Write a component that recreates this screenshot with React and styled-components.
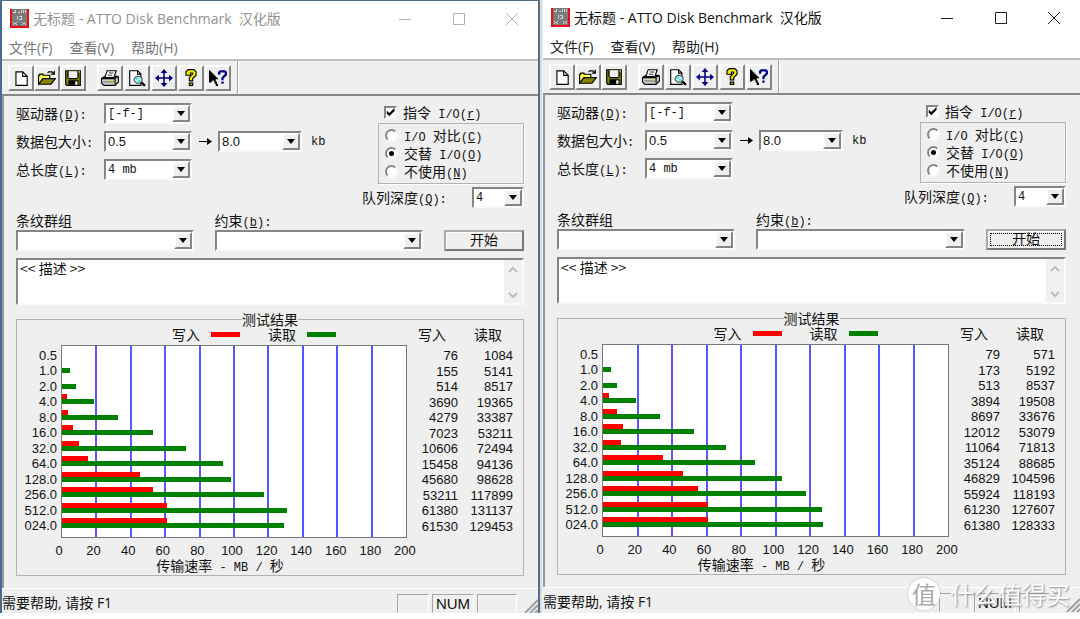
import React from "react";
import styled, { createGlobalStyle, css } from "styled-components";

const GlobalStyle = createGlobalStyle`
  * {
    box-sizing: border-box;
  }

  body {
    margin: 0;
    background: #fff;
    color: #111;
    font: 14px/16px "Noto Sans CJK SC", sans-serif;
  }

  input, select, textarea, button {
    margin: 0;
    color: inherit;
    font: inherit;
  }
`;

const face = "#efefef";

const sunken = css`
  border: 2px solid;
  border-color: #858585 #fafafa #fafafa #858585;
`;

const raised = css`
  border: 2px solid;
  border-color: #fdfdfd #858585 #858585 #fdfdfd;
`;

const Desktop = styled.main`
  display: grid;
  grid-template-columns: 1fr 1fr;
  position: relative;
`;

const Window = styled.section`
  min-width: 0;
  background: ${face};
  border: solid #4f7088;
  border-width: ${({ $active }) => ($active ? "0" : "1px 2px 0 2px")};
  border-left: ${({ $active }) => ($active ? "2px solid #dcdcdc" : "2px solid #476c93")};
  padding-left: ${({ $active }) => ($active ? "1px" : "0")};
`;

const TitleBar = styled.header`
  display: flex;
  align-items: center;
  height: 35px;
  padding-left: 8px;
  background: #fff;
  color: ${({ $active }) => ($active ? "#111" : "#929292")};
`;

const Title = styled.h1`
  flex: 1;
  margin: 0 0 0 4px;
  font: 14px/18px "Open Sans", "Noto Sans CJK SC", sans-serif;
  white-space: pre;
`;

const CaptionButton = styled.button`
  display: flex;
  align-items: center;
  justify-content: center;
  width: 54px;
  height: 34px;
  padding: 0;
  border: 0;
  background: none;
  color: ${({ $active }) => ($active ? "#222" : "#b0b0b0")};

  &:last-child {
    width: 52px;
  }
`;

const MenuBar = styled.nav`
  display: flex;
  gap: 17px;
  height: 23px;
  padding-left: 7px;
  background: #fff;
`;

const MenuItem = styled.button`
  padding: 0;
  border: 0;
  background: none;
  font: 14px/22px "Open Sans", "Noto Sans CJK SC", sans-serif;
  color: ${({ $active }) => ($active ? "#222" : "#757575")};
`;

const ToolBar = styled.div`
  display: flex;
  align-items: center;
  height: 35px;
  padding-left: 6px;
  border-top: 2px solid #bdbdbd;
`;

const ToolGroup = styled.div`
  display: flex;
  gap: ${({ $wide }) => ($wide ? "0" : "1px")};
  margin-right: ${({ $wide }) => ($wide ? "11px" : "6px")};
`;

const ToolButton = styled.button`
  ${raised}
  display: flex;
  align-items: center;
  justify-content: center;
  width: 26px;
  height: 26px;
  padding: 0;
  background: ${face};
`;

const ToolEnd = styled.span`
  align-self: stretch;
  border-left: 1px solid #a5a5a5;
  border-right: 1px solid #fff;
`;

const Client = styled.form`
  padding: 7px 14px 12px 12px;
  border: solid #888;
  border-width: 2px 0 0 2px;
  border-left-color: #999;
`;

const Settings = styled.div`
  display: flex;
  justify-content: space-between;
`;

const Fields = styled.div`
  display: flex;
  flex-direction: column;
  gap: 7px;
`;

const Field = styled.div`
  display: flex;
  align-items: center;
  height: 21px;
`;

const FieldLabel = styled.label`
  width: 88px;
  white-space: nowrap;
`;

const Mono = styled.span`
  font: 12px/12px "Liberation Mono", monospace;
`;

const Arrow = styled.span`
  display: flex;
  justify-content: center;
  width: 26px;
`;

const Unit = styled(Mono)`
  margin-left: 9px;
`;

const SelectFrame = styled.span`
  ${sunken}
  display: grid;
  width: ${({ $width }) => $width};
  height: 21px;
  background: #fff;
`;

const SelectInput = styled.select`
  grid-area: 1 / 1;
  width: 100%;
  padding: 0 18px 0 2px;
  border: 0;
  background: none;
  appearance: none;
  font: ${({ $mono }) =>
    $mono
      ? '12px/16px "Liberation Mono", monospace'
      : '13px/16px "Liberation Sans", sans-serif'};
`;

const SelectArrow = styled.span`
  ${raised}
  grid-area: 1 / 1;
  justify-self: end;
  display: flex;
  align-items: center;
  justify-content: center;
  width: 18px;
  background: ${face};
  pointer-events: none;

  &::before {
    content: "";
    border: 4px solid transparent;
    border-top: 5px solid #000;
    border-bottom: 0;
  }
`;

const Options = styled.div`
  display: flex;
  flex-direction: column;
  width: 162px;
`;

const Choice = styled.label`
  display: flex;
  align-items: center;
  gap: 6px;
  height: 18px;
  margin-left: ${({ $inset }) => ($inset ? "6px" : "22px")};
  white-space: pre;
`;

const Check = styled.input`
  ${sunken}
  display: grid;
  width: 13px;
  height: 13px;
  background: #fff;
  appearance: none;

  &:checked::before {
    content: "";
    background: #000;
    clip-path: polygon(8% 35%, 36% 60%, 95% 5%, 95% 38%, 36% 96%, 8% 68%);
  }
`;

const Radio = styled.input`
  ${sunken}
  display: flex;
  align-items: center;
  justify-content: center;
  width: 13px;
  height: 13px;
  border-radius: 50%;
  background: #fff;
  appearance: none;

  &:checked::before {
    content: "";
    width: 5px;
    height: 5px;
    border-radius: 50%;
    background: #000;
  }
`;

const RadioGroup = styled.fieldset`
  min-width: 0;
  margin: 2px 0 3px 16px;
  padding: 2px 0 3px;
  border: 1px solid #b2b2b2;
  box-shadow: 1px 1px #fff;
`;

const Queue = styled.div`
  display: flex;
  align-items: center;
  justify-content: space-between;
  white-space: nowrap;
`;

const Groups = styled.div`
  display: grid;
  grid-template-columns: 178fr 209fr 80px;
  grid-template-rows: 16px 21px;
  column-gap: 21px;
  row-gap: 2px;
  margin-top: 4px;
`;

const StartButton = styled.button`
  grid-column: 3;
  padding: 0 0 3px;
  border: 2px solid;
  border-color: #aaa #777 #777 #aaa;
  background: ${face};
  box-shadow: inset 1px 1px #fff;
  line-height: 14px;
  outline: ${({ $focused }) => ($focused ? "1px dotted #000" : "none")};
  outline-offset: -5px;
`;

const Description = styled.div`
  ${sunken}
  display: flex;
  height: 47px;
  margin-top: 7px;
  background: #fff;
`;

const DescriptionText = styled.textarea`
  flex: 1;
  padding: 0 2px;
  border: 0;
  outline: 0;
  background: none;
  resize: none;
  overflow: hidden;
`;

const Scroller = styled.div`
  display: flex;
  flex-direction: column;
  align-items: center;
  justify-content: space-between;
  width: 18px;
  padding: 6px 0 4px;
  background: #f1f1f1;
`;

const Results = styled.fieldset`
  display: grid;
  grid-template-columns: 40px 1fr 116px;
  grid-template-rows: 19px auto auto;
  column-gap: 0;
  min-width: 0;
  margin: 7px 0 0;
  padding: 0 0 1px;
  border: 1px solid #b2b2b2;
`;

const ResultsTitle = styled.legend`
  margin: 0 auto;
  padding: 0;
  line-height: 14px;
`;

const Legend = styled.div`
  grid-area: 1 / 2;
  display: flex;
  align-items: center;
  justify-content: center;
  gap: 11px;
  padding: 0 0 3px 44px;
  line-height: 14px;
`;

const Swatch = styled.span`
  width: 29px;
  height: 5px;
  background: ${({ $color }) => $color};

  & + span {
    margin-left: 17px;
  }
`;

const figures = css`
  font-family: "Liberation Sans", sans-serif;
  font-size: 13px;
  line-height: 15px;
`;

const rowHeights = css`
  ${figures}
  height: 15px;

  &:nth-child(even) {
    height: 16px;
  }
`;

const Sizes = styled.ol`
  grid-area: 2 / 1;
  margin: 0;
  padding: 3px 0 0;
  list-style: none;
  text-align: right;
`;

const Size = styled.li`
  ${rowHeights}
`;

const Plot = styled.svg`
  grid-area: 2 / 2;
  display: block;
  width: calc(100% - 4px);
  height: 193px;
  margin-left: 4px;
  border: 1px solid #777;
  background: #fff;
`;

const Ticks = styled.div`
  ${figures}
  grid-area: 3 / 2;
  display: flex;
  justify-content: space-between;
  padding: 5px 2px 0;
`;

const Tick = styled.span`
  display: flex;
  justify-content: center;
  width: 0;
`;

const AxisTitle = styled.div`
  grid-area: 4 / 2;
  padding-right: 24px;
  line-height: 14px;
  text-align: center;
  white-space: pre;
`;

const Values = styled.table`
  grid-area: 1 / 3 / 3 / 4;
  align-self: start;
  width: 100%;
  border-collapse: collapse;
  table-layout: fixed;
`;

const ValueHead = styled.th`
  height: 22px;
  padding: 0 ${({ $last }) => ($last ? "21px" : "12px")} 0 0;
  width: ${({ $last }) => ($last ? "65px" : "51px")};
  font-weight: normal;
  line-height: 16px;
  text-align: right;
  vertical-align: top;
`;

const ValueRow = styled.tr`
  ${rowHeights}
`;

const Value = styled.td`
  padding: 0;
  text-align: right;

  &:last-child {
    padding-right: 10px;
  }
`;

const StatusBar = styled.footer`
  display: flex;
  align-items: stretch;
  gap: 3px;
  height: 25px;
  padding-top: 5px;
  border-top: 1px solid #fff;
  font: 14px/18px "Open Sans", "Noto Sans CJK SC", sans-serif;
`;

const StatusText = styled.span`
  flex: 1;
`;

const Pane = styled.span`
  width: ${({ $width }) => $width};
  border: 1px solid;
  border-color: #a5a5a5 #fff transparent #a5a5a5;
  font-family: "Liberation Sans", sans-serif;
  font-size: 15px;
  text-align: center;
`;

const Grip = styled.svg`
  align-self: end;
  width: 18px;
  height: 14px;
`;

const Watermark = styled.div`
  position: absolute;
  right: 10px;
  bottom: 3px;
  display: flex;
  align-items: center;
  gap: 10px;
  color: #fff;
  font-size: 24px;
  line-height: 32px;
  text-shadow: 1px 1px 2px #888;
`;

const WatermarkBadge = styled.span`
  width: 32px;
  height: 32px;
  border-radius: 50%;
  background: #fff;
  box-shadow: 0 0 2px #aaa;
  color: #aaa;
  text-align: center;
  text-shadow: none;
`;

const AppIcon = () => (
  <svg width="19" height="19" viewBox="0 0 19 19" shapeRendering="crispEdges">
    <path fill="#f00d12" d="M0 0h19v19H0z" />
    <path fill="#7b7b7b" d="M2 0h15v17H2z" />
    <path
      fill="none"
      stroke="#d5d5d5"
      d="M3 3.500h3M5.500 1v3M8 3.500h2M11.500 1v3M13.500 1v3M15.500 1v3M7.500 7v4M9 7.500h2M9 10.500h2M11.500 7v4M3 13.500h1m2 0h1M4 14.500h2M3 15.500h1m2 0h1M12 13.500h1m2 0h1M13 14.500h2M12 15.500h1m2 0h1"
    />
  </svg>
);

const toolIcons = {
  新建: (
    <>
      <path fill="#fff" stroke="#000" d="M3.500 2.500h6l4 4v8h-10z" />
      <path fill="none" stroke="#000" d="M9.500 2.500v4h4" />
    </>
  ),
  打开: (
    <>
      <path fill="#ffff55" stroke="#000" d="M.5 13.500v-8h1v-1h3v1h6v3h-6z" />
      <path fill="#848400" stroke="#000" d="M.5 13.500l4-5h11l-4 5z" />
      <path fill="none" stroke="#000" d="M8.500 3.500l1-1h3l2 2M14.500 1.500v3h-3" />
    </>
  ),
  保存: (
    <>
      <path fill="#848400" stroke="#000" d="M1.500 1.500h13v13h-12l-1-1z" />
      <path fill="#efefef" d="M4 2h8v6H4z" />
      <path fill="#000" d="M3 2h1v6H3zM12 2h1v6h-1zM4 8h8v1H4zM4 10h9v4H4z" />
      <path fill="#fff" d="M10 11h2v3h-2z" />
      <path fill="#efefef" d="M13 2h1v1h-1z" />
    </>
  ),
  打印: (
    <>
      <path fill="#ccc" stroke="#000" d="M.5 8.500l3-2h11l1 1v4l-3 3h-10l-2-2z" />
      <path fill="#fff" stroke="#000" d="M3.500 7.500l2-6h8l-2 6z" />
      <path fill="none" stroke="#333" d="M7 3.500h4M6 5.500h4" />
      <path fill="none" stroke="#000" d="M.5 8.500h11l4-2M12.500 8.500v5" />
      <path fill="#777" d="M2 11h10v1H2z" />
      <path fill="#dede00" d="M8 10h3v1H8z" />
    </>
  ),
  打印预览: (
    <>
      <path fill="#fff" stroke="#000" d="M1.500 1.500h7l3 3v10h-10z" />
      <path fill="none" stroke="#000" d="M8.500 1.500v3h3" />
      <path fill="#b5f5f5" stroke="#555" d="M7.500 6.500h3l2 2v2l-2 2h-3l-2-2v-2z" />
      <path fill="#00e5e5" d="M7 8h2v1H7zM9 10h2v1H9z" />
      <path fill="none" stroke="#000" strokeWidth="2" d="M12 12l3 3" />
    </>
  ),
  移动: (
    <path
      fill="#000080"
      d="M8 0L11 3.500H8.700V7.300H12.500V5L16 8 12.500 11V8.700H8.700v3.800H11L8 16 5 12.500h2.300V8.700H3.500V11L0 8l3.500-3v2.300h3.800V3.500H5z"
    />
  ),
  关于: (
    <path
      fill="#f5ef00"
      stroke="#000"
      d="M3.500 5.500v-3l2-2h5l2 2v3l-3 3v2h-3v-3l3-3v-1h-2v2h-3zM6.500 12.500h3v2h-3z"
    />
  ),
  帮助: (
    <>
      <path fill="#000" d="M0 1h1v1h1v1h1v1h1v1h1v1h1v1h1v1h1v1H6v2h1v2h1v2H6v-2H5v-2H4v-1H3v1H2v1H0z" />
      <path fill="none" stroke="#000080" strokeWidth="2" d="M9 5V3l1-1h4l1 1v2l-3 3v2M11 12h2" />
    </>
  ),
};

const ToolIcon = ({ name }) => (
  <svg width="18" height="18" viewBox="0 0 16 16">
    {toolIcons[name]}
  </svg>
);

const Chevron = ({ down }) => (
  <svg width="10" height="8" viewBox="0 0 10 8" fill="none" stroke="#bebebe" strokeWidth="2">
    <path d={down ? "M1 2l4 4 4-4" : "M1 6l4-4 4 4"} />
  </svg>
);

const Select = ({ width, mono, ...props }) => (
  <SelectFrame $width={width}>
    <SelectInput $mono={mono} defaultValue={props.value} id={props.id} aria-label={props.label}>
      <option>{props.value}</option>
    </SelectInput>
    <SelectArrow />
  </SelectFrame>
);

const Key = ({ children, before = "", colon }) => (
  <Mono>
    {before}(<u>{children}</u>){colon && ":"}
  </Mono>
);

const WRITE = "#ff0000";
const READ = "#008000";
const sizes = ["0.5", "1.0", "2.0", "4.0", "8.0", "16.0", "32.0", "64.0", "128.0", "256.0", "512.0", "024.0"];
const ticks = [0, 20, 40, 60, 80, 100, 120, 140, 160, 180, 200];

const runs = [
  {
    id: "first",
    write: [76, 155, 514, 3690, 4279, 7023, 10606, 15458, 45680, 53211, 61380, 61530],
    read: [1084, 5141, 8517, 19365, 33387, 53211, 72494, 94136, 98628, 117899, 131137, 129453],
  },
  {
    id: "second",
    active: true,
    write: [79, 173, 513, 3894, 8697, 12012, 11064, 35124, 46829, 55924, 61230, 61380],
    read: [571, 5192, 8537, 19508, 33676, 53079, 71813, 88685, 104596, 118193, 127607, 128333],
  },
];

// Rates are in KB/s, the axis ends at 200 MB/s. Very slow rates leave no bar.
const barWidth = (rate) => (rate < 2000 ? 0 : `${rate / 2000}%`);
const rowTop = (i) => Math.floor(i * 15.5);

const Chart = ({ write, read }) => (
  <Plot role="img" aria-label="测试结果" shapeRendering="crispEdges">
    {ticks.slice(1, -1).map((tick) => (
      <line key={tick} x1={`${tick / 2}%`} x2={`${tick / 2}%`} y1="0" y2="100%" stroke="#5656ff" strokeWidth="2" />
    ))}
    {sizes.map((size, i) => (
      <g key={size}>
        <rect x="-1" y={rowTop(i) + 2} width={barWidth(write[i])} height="5" fill={WRITE} />
        <rect x="-1" y={rowTop(i) + 7} width={barWidth(read[i])} height="5" fill={READ} />
      </g>
    ))}
  </Plot>
);

const Benchmark = ({ id, active, write, read }) => (
  <Window $active={active}>
    <TitleBar $active={active}>
      <AppIcon />
      <Title>{"无标题 - ATTO Disk Benchmark  汉化版"}</Title>
      <CaptionButton $active={active} type="button" aria-label="最小化">
        <svg width="12" height="12" stroke="currentColor"><path d="M0 6.500h12" /></svg>
      </CaptionButton>
      <CaptionButton $active={active} type="button" aria-label="最大化">
        <svg width="12" height="12" fill="none" stroke="currentColor"><path d="M.5.5h11v11H.5z" /></svg>
      </CaptionButton>
      <CaptionButton $active={active} type="button" aria-label="关闭">
        <svg width="12" height="12" stroke="currentColor"><path d="M0 0l12 12M12 0L0 12" /></svg>
      </CaptionButton>
    </TitleBar>

    <MenuBar>
      {["文件(F)", "查看(V)", "帮助(H)"].map((item) => (
        <MenuItem key={item} $active={active} type="button">{item}</MenuItem>
      ))}
    </MenuBar>

    <ToolBar>
      <ToolGroup $wide>
        {["新建", "打开", "保存"].map((name) => (
          <ToolButton key={name} type="button" aria-label={name}><ToolIcon name={name} /></ToolButton>
        ))}
      </ToolGroup>
      <ToolGroup>
        {["打印", "打印预览", "移动", "关于", "帮助"].map((name) => (
          <ToolButton key={name} type="button" aria-label={name}><ToolIcon name={name} /></ToolButton>
        ))}
      </ToolGroup>
      <ToolEnd />
    </ToolBar>

    <Client onSubmit={(e) => e.preventDefault()}>
      <Settings>
        <Fields>
          <Field>
            <FieldLabel htmlFor={`${id}-drive`}>驱动器<Key colon>D</Key></FieldLabel>
            <Select id={`${id}-drive`} width="88px" value="[-f-]" mono />
          </Field>
          <Field>
            <FieldLabel htmlFor={`${id}-from`}>数据包大小<Mono>:</Mono></FieldLabel>
            <Select id={`${id}-from`} width="88px" value="0.5" />
            <Arrow>
              <svg width="13" height="9" viewBox="0 0 13 9">
                <path d="M0 4.500h11" stroke="#000" />
                <path d="M8 1l5 3.500L8 8z" />
              </svg>
            </Arrow>
            <Select label="数据包大小 kb" width="84px" value="8.0" />
            <Unit>kb</Unit>
          </Field>
          <Field>
            <FieldLabel htmlFor={`${id}-length`}>总长度<Key colon>L</Key></FieldLabel>
            <Select id={`${id}-length`} width="88px" value="4 mb" mono />
          </Field>
        </Fields>

        <Options>
          <Choice>
            <Check type="checkbox" defaultChecked />
            <span>指令<Key before=" I/O">r</Key></span>
          </Choice>
          <RadioGroup>
            <Choice $inset>
              <Radio type="radio" name={`${id}-io`} />
              <span><Mono>I/O </Mono>对比<Key>C</Key></span>
            </Choice>
            <Choice $inset>
              <Radio type="radio" name={`${id}-io`} defaultChecked />
              <span>交替<Key before=" I/O">O</Key></span>
            </Choice>
            <Choice $inset>
              <Radio type="radio" name={`${id}-io`} />
              <span>不使用<Key>N</Key></span>
            </Choice>
          </RadioGroup>
          <Queue>
            <label htmlFor={`${id}-queue`}>队列深度<Key colon>Q</Key></label>
            <Select id={`${id}-queue`} width="52px" value="4" mono />
          </Queue>
        </Options>
      </Settings>

      <Groups>
        <label htmlFor={`${id}-stripe`}>条纹群组</label>
        <label htmlFor={`${id}-bound`}>约束<Key colon>b</Key></label>
        <span />
        <Select id={`${id}-stripe`} width="100%" value="" />
        <Select id={`${id}-bound`} width="100%" value="" />
        <StartButton $focused={active}>开始</StartButton>
      </Groups>

      <Description>
        <DescriptionText aria-label="描述" defaultValue="<< 描述 >>" />
        <Scroller>
          <Chevron />
          <Chevron down />
        </Scroller>
      </Description>

      <Results>
        <ResultsTitle>测试结果</ResultsTitle>
        <Legend>
          <span>写入</span>
          <Swatch $color={WRITE} />
          <span>读取</span>
          <Swatch $color={READ} />
        </Legend>
        <Sizes>
          {sizes.map((size) => (
            <Size key={size}>{size}</Size>
          ))}
        </Sizes>
        <Chart write={write} read={read} />
        <Values>
          <thead>
            <tr>
              <ValueHead>写入</ValueHead>
              <ValueHead $last>读取</ValueHead>
            </tr>
          </thead>
          <tbody>
            {sizes.map((size, i) => (
              <ValueRow key={size}>
                <Value>{write[i]}</Value>
                <Value>{read[i]}</Value>
              </ValueRow>
            ))}
          </tbody>
        </Values>
        <Ticks>
          {ticks.map((tick) => (
            <Tick key={tick}>{tick}</Tick>
          ))}
        </Ticks>
        <AxisTitle>传输速率<Mono> - MB / </Mono>秒</AxisTitle>
      </Results>
    </Client>

    <StatusBar>
      <StatusText>需要帮助, 请按 F1</StatusText>
      <Pane $width="32px" />
      <Pane $width="42px">NUM</Pane>
      <Pane $width="40px" />
      <Grip viewBox="0 0 18 14" stroke="#a0a0a0" strokeWidth="2">
        <path d="M5 14L18 1M10 14l8-8M15 14l3-3" />
      </Grip>
    </StatusBar>
  </Window>
);

const App = () => (
  <>
    <GlobalStyle />
    <Desktop>
      {runs.map((run) => (
        <Benchmark key={run.id} {...run} />
      ))}
      <Watermark>
        <WatermarkBadge>值</WatermarkBadge>
        什么值得买
      </Watermark>
    </Desktop>
  </>
);

export default App;
